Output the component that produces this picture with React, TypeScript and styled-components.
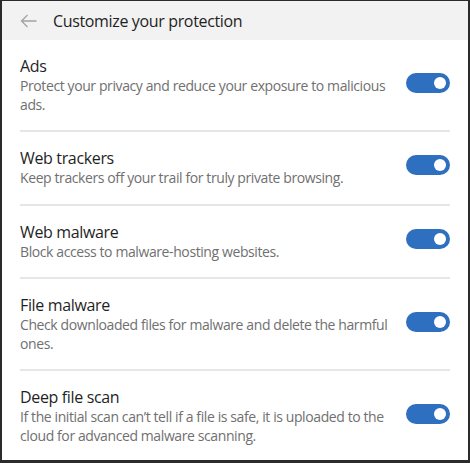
import styled, { createGlobalStyle } from 'styled-components'

const Global = createGlobalStyle`
    html, body {
        margin: 0;
        padding: 0;
        background: #ffffff;
    }
    * {
        box-sizing: border-box;
    }
`

const Janela = styled.div`
    width: 470px;
    height: 463px;
    border-style: solid;
    border-color: #2b2b2b;
    border-width: 1px 2px 3px 2px;
    background: #ffffff;
    display: flex;
    flex-direction: column;
    font-family: "Open Sans", "Noto Sans", sans-serif;
    overflow: hidden;
`

const Cabecalho = styled.div`
    height: 39px;
    background-color: #f2f2f2;
    display: flex;
    align-items: center;
    padding-left: 17px;
    gap: 16px;
    flex-shrink: 0;
`

const Voltar = styled.button`
    border: none;
    background: none;
    padding: 0;
    width: 18px;
    height: 18px;
    display: flex;
    align-items: center;
    justify-content: center;
    cursor: pointer;
`

const Titulo = styled.h1`
    margin: 0;
    font-size: 16px;
    font-weight: 400;
    color: #1f1f1f;
    letter-spacing: -0.35px;
`

const Lista = styled.div`
    display: flex;
    flex-direction: column;
    padding: 0 18px;
`

const Item = styled.div<{ $ultimo?: boolean }>`
    display: flex;
    align-items: center;
    gap: 8px;
    padding: 15px 0 16px;
    border-bottom: ${({ $ultimo }) => ($ultimo ? 'none' : '2px solid #e6e6e6')};
`

const Textos = styled.div`
    flex: 1;
    display: flex;
    flex-direction: column;
`

const Nome = styled.div`
    font-size: 16px;
    line-height: 22px;
    color: #1f1f1f;
    letter-spacing: -0.35px;
`

const Descricao = styled.div`
    font-size: 14px;
    line-height: 18.5px;
    color: #707070;
    letter-spacing: -0.4px;
`

const Chave = styled.button<{ $ligado: boolean }>`
    width: 44px;
    height: 20px;
    border-radius: 10px;
    border: none;
    padding: 0 4px;
    margin-bottom: 4px;
    flex-shrink: 0;
    display: flex;
    align-items: center;
    justify-content: ${({ $ligado }) => ($ligado ? 'flex-end' : 'flex-start')};
    background-color: ${({ $ligado }) => ($ligado ? '#2f6fbf' : '#cccccc')};
    cursor: pointer;
`

const Bolinha = styled.span`
    width: 12px;
    height: 12px;
    border-radius: 50%;
    background: #ffffff;
`

const itens = [
    { nome: 'Ads', descricao: 'Protect your privacy and reduce your exposure to malicious ads.' },
    { nome: 'Web trackers', descricao: 'Keep trackers off your trail for truly private browsing.' },
    { nome: 'Web malware', descricao: 'Block access to malware-hosting websites.' },
    { nome: 'File malware', descricao: 'Check downloaded files for malware and delete the harmful ones.' },
    { nome: 'Deep file scan', descricao: 'If the initial scan can\u2019t tell if a file is safe, it is uploaded to the cloud for advanced malware scanning.' },
]

export default function App() {
    return (
        <>
            <Global />
            <Janela>
                <Cabecalho>
                    <Voltar aria-label="Back">
                        <svg width="17" height="14" viewBox="0 0 17 14" fill="none">
                            <path d="M16.5 7H1.5M7.5 1L1.5 7L7.5 13" stroke="#a3a3a3" strokeWidth="1.3" />
                        </svg>
                    </Voltar>
                    <Titulo>Customize your protection</Titulo>
                </Cabecalho>
                <Lista>
                    {itens.map((item, i) => (
                        <Item key={item.nome} $ultimo={i === itens.length - 1}>
                            <Textos>
                                <Nome>{item.nome}</Nome>
                                <Descricao>{item.descricao}</Descricao>
                            </Textos>
                            <Chave $ligado={true} aria-label={item.nome}>
                                <Bolinha />
                            </Chave>
                        </Item>
                    ))}
                </Lista>
            </Janela>
        </>
    )
}
